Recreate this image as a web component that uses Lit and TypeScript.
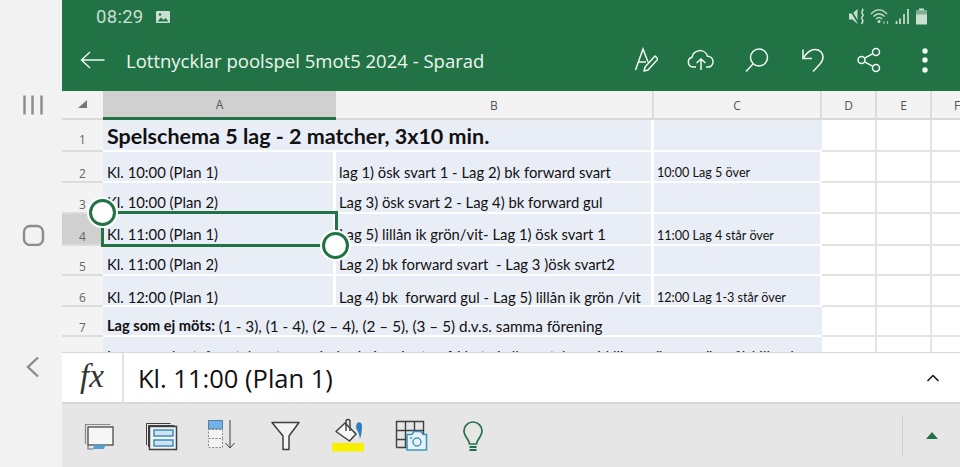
import { LitElement, html, css, svg } from "lit";
import { customElement } from "lit/decorators.js";

type Cell = { t?: unknown; cls: string };

const COLS = ["A", "B", "C", "D", "E", "F"];

const ROWS: { n: string; sel?: boolean; rc?: string; cells: Cell[] }[] = [
  { n: "1", rc: "first", cells: [
    { t: "Spelschema 5 lag - 2 matcher, 3x10 min.", cls: "blue headline span2" },
    { cls: "blue lastfull" },
  ]},
  { n: "2", cells: [
    { t: "Kl. 10:00 (Plan 1)", cls: "blue a" },
    { t: "lag 1) ösk svart 1 - Lag 2) bk forward svart", cls: "blue b" },
    { t: "10:00 Lag 5 över", cls: "blue c" },
  ]},
  { n: "3", cells: [
    { t: "Kl. 10:00 (Plan 2)", cls: "blue a up" },
    { t: "Lag 3) ösk svart 2 - Lag 4) bk forward gul", cls: "blue b up" },
    { cls: "blue c" },
  ]},
  { n: "4", sel: true, cells: [
    { t: "Kl. 11:00 (Plan 1)", cls: "blue a up" },
    { t: "Lag 5) lillån ik grön/vit- Lag 1) ösk svart 1", cls: "blue b up" },
    { t: "11:00 Lag 4 står över", cls: "blue c" },
  ]},
  { n: "5", cells: [
    { t: "Kl. 11:00 (Plan 2)", cls: "blue a up" },
    { t: "Lag 2) bk forward svart  - Lag 3 )ösk svart2", cls: "blue b up" },
    { cls: "blue c" },
  ]},
  { n: "6", cells: [
    { t: "Kl. 12:00 (Plan 1)", cls: "blue a low" },
    { t: "Lag 4) bk  forward gul - Lag 5) lillån ik grön /vit", cls: "blue b low" },
    { t: "12:00 Lag 1-3 står över", cls: "blue c clow" },
  ]},
  { n: "7", cells: [
    { t: html`<b>Lag som ej möts:</b><span class="wide"> (1 - 3), (1 - 4), (2 – 4), (2 – 5), (3 – 5) d.v.s. samma förening</span>`, cls: "blue a span3 low up" },
  ]},
  { n: "", cells: [
    { t: "Lagen spelar två matcher, tre perioder à tio minuter, fri byte i alla matcher, vid lika poäng avgör målskillnad", cls: "blue a span3 clipped" },
  ]},
];

const ic = (w: number, h: number, body: unknown) =>
  html`<svg width=${w} height=${h} viewBox="0 0 ${w} ${h}" fill="none">${body}</svg>`;

const G = "#3f3f3f";
const BL = "#4f9fd0";
const W = "#f2f7f4";
const S = "#c9dfd1";

const TOOL_ICONS = [
  ic(36, 36, svg`
    <path d="M5.500 27V7.500h25" stroke="#8a8a8a" stroke-width="1.200"/>
    <rect x="8" y="10" width="25" height="18" fill="#f6f6f6" stroke="#4a4a4a" stroke-width="1.300"/>
    <path d="M15 28h11l-2.500 4H12.500z" fill="${BL}"/>
    <path d="M8 28v4h5" stroke="#777" stroke-width="1.200"/>`),
  ic(36, 36, svg`
    <path d="M3.500 28V6.500h24M5.500 30V8.500h26" stroke="${G}" stroke-width="1"/>
    <rect x="6.500" y="9.500" width="27" height="23" fill="#f4f4f4" stroke="${G}" stroke-width="1.500"/>
    <rect x="11" y="13" width="19" height="6" fill="#cfe3f1" stroke="#3b8fc0" stroke-width="1.500"/>
    <rect x="11" y="23" width="19" height="6" fill="#cfe3f1" stroke="#3b8fc0" stroke-width="1.500"/>`),
  ic(36, 36, svg`
    <rect x="3.500" y="3.500" width="14" height="8.500" fill="#6fb3ea" stroke="#5a7d9a"/>
    <rect x="3.500" y="12.500" width="14" height="9" fill="#f4f4f4" stroke="#8a8a8a" stroke-dasharray="2 1.500"/>
    <rect x="3.500" y="21.500" width="14" height="9" fill="#f4f4f4" stroke="#8a8a8a" stroke-dasharray="2 1.500"/>
    <path d="M25 3v27M20.500 26l4.500 5 4.500-5" stroke="${G}" stroke-width="1"/>`),
  ic(36, 36, svg`
    <path d="M4 5.500h27L21 19v13.500h-6V19z" stroke="${G}" stroke-width="1.500" stroke-linejoin="round" fill="#f4f4f4"/>`),
  ic(36, 36, svg`
    <rect x="2" y="26" width="32" height="8.500" fill="#f9f000"/>
    <path d="M6 14.500l9-8.500 11 11-6.500 7z" fill="#f7f7f7" stroke="${G}" stroke-width="1.500" stroke-linejoin="round"/>
    <path d="M16 14V4.500a2 2 0 0 1 4 0V14" stroke="${G}" stroke-width="1.400"/>
    <path d="M27 6c3-2 5 0 5 3 0 4-.5 9-2 13-.5-3-1-6-2.500-8-1.500-2-2-5-.5-8z" fill="#2f7fc0"/>`),
  ic(36, 36, svg`
    <path d="M3.500 30.500V4.500h27v14M3.500 13.500h27M3.500 22.500h14M12.500 4.500v26M21.500 4.500v14M3.500 30.500h13" stroke="${G}" stroke-width="1.400"/>
    <path d="M14 17.500h5l2-3h7l2 3h3.500v15.500H14z" fill="#eaf3f8" stroke="#3f96c4" stroke-width="1.600"/>
    <circle cx="24" cy="25" r="4" stroke="#3f96c4" stroke-width="1.500"/>
    <path d="M17 21h2" stroke="#3f96c4" stroke-width="1.500"/>`),
  ic(36, 36, svg`
    <path d="M14.500 27c0-4-5.500-7.500-5.500-13a9 9 0 0 1 18 0c0 5.500-5.500 9-5.500 13z" stroke="#217346" stroke-width="1.700" stroke-linejoin="round"/>
    <path d="M14.500 30h7M14.500 33h7" stroke="#217346" stroke-width="1.800"/>`),
];

@customElement("app-root")
export class AppRoot extends LitElement {
  static styles = css`
    :host { display: block; width: 960px; height: 467px; overflow: hidden; font-family: "Open Sans", sans-serif; }
    .root { display: flex; width: 960px; height: 467px; }
    .rail { width: 62px; flex: none; background: #f2f2f2; display: flex; flex-direction: column; align-items: center; padding: 93px 0 0 3px; box-sizing: border-box; }
    .rail svg { display: block; }
    .rail .home { margin-top: 105px; }
    .rail .backnav { margin-top: 109px; }
    .main { flex: 1; min-width: 0; display: flex; flex-direction: column; }

    .appbar { height: 91px; flex: none; background: #217346; color: #fff; display: flex; flex-direction: column; }
    .status { height: 33px; display: flex; align-items: center; padding: 0 32px 0 34px; color: #c9dfd1; font-family: Roboto, sans-serif; font-size: 18.500px; letter-spacing: .3px; }
    .status .time { margin-right: 11px; }
    .status svg { display: block; }
    .spacer { flex: 1; }
    .status .right { display: flex; align-items: center; gap: 5px; }
    .actions { height: 54px; display: flex; align-items: center; padding: 0 7px 0 18px; }
    .doc { margin-left: 21px; font-size: 18.500px; color: #eef5f0; white-space: nowrap; }
    .act { width: 56px; display: flex; justify-content: center; }
    .act svg { display: block; }

    .sheet { position: relative; flex: none; height: 261px; overflow: hidden; background: #fff; }
    .grid { display: grid; grid-template-columns: 41px 233px 318px 168px 55px 55px 52px; grid-template-rows: 29px 32px 31px 31px 32px 30px 31px 30px 30px; }
    .corner, .colh { background: #f3f3f3; border-bottom: 2px solid #d9d9d9; box-sizing: border-box; }
    .corner { display: flex; align-items: center; justify-content: center; }
    .colh { display: flex; align-items: center; justify-content: center; font-size: 12px; color: #555; border-right: 2px solid #dcdcdc; padding-top: 1px; }
    .colh.on { background: #d0d0d0; border-right: none; border-bottom: 3px solid #217346; }
    .rowh { background: #f3f3f3; border-bottom: 2px solid #dcdcdc; box-sizing: border-box; display: flex; align-items: flex-end; justify-content: center; font-size: 12px; line-height: 15px; color: #666; }
    .rowh.first { padding-bottom: 3px; }
    .rowh.on { background: #d0d0d0; }
    .cell { box-sizing: border-box; display: flex; align-items: flex-end; white-space: pre; font-family: Lato, sans-serif; color: #111; min-width: 0; }
    .blue { background: #e9edf6; background-clip: padding-box; border-right: 3px solid #fff; border-bottom: 2px solid #fff; font-size: 14.850px; padding-left: 3px; line-height: 18px; }
    .a { padding-left: 4px; }
    .up { padding-bottom: 1px; }
    .low { line-height: 16px; }
    .c { font-size: 12.600px; border-right-width: 2px; padding-left: 3px; line-height: 16px; }
    .clow { line-height: 14px; }
    .cell b { font-size: 14.600px; }
    .wide { font-size: 15.300px; }
    .cell.headline { font-size: 21.500px; font-weight: 700; padding-left: 4px; line-height: 24px; padding-bottom: 2px; }
    .lastfull { border-right: none; }
    .span2 { grid-column: span 2; }
    .span3 { grid-column: span 3; border-right: none; }
    .clipped span { display: block; margin-bottom: 0; }
    .empty { border-right: 2px solid #e4e4e4; border-bottom: 2px solid #e4e4e4; box-sizing: border-box; background: #fff; }

    .selection { position: absolute; left: 39px; top: 120px; width: 237px; height: 36px; box-sizing: border-box; border: 3px solid #217346; }
    .handle { position: absolute; width: 27px; height: 27px; box-sizing: border-box; border-radius: 50%; background: #fff; border: 3px solid #217346; box-shadow: 0 0 0 2px #fff; }
    .h1 { left: 27px; top: 108px; }
    .h2 { left: 260px; top: 141px; }

    .formula { height: 52px; flex: none; background: #fff; border-top: 1px solid #d8d8d8; border-bottom: 2px solid #d8d8d8; box-sizing: border-box; display: flex; align-items: center; }
    .fx { width: 62px; height: 100%; flex: none; box-sizing: border-box; border-right: 2px solid #e2e2e2; display: flex; align-items: center; justify-content: center; font-family: "Liberation Serif", serif; font-style: italic; font-size: 33px; color: #333; padding-bottom: 2px; }
    .value { margin-left: 14px; font-size: 25.500px; color: #111; white-space: nowrap; }
    .chev { margin-left: auto; margin-right: 20px; display: block; }
    .chev svg { display: block; }

    .tools { flex: 1; background: #e6e6e6; display: flex; align-items: center; padding-left: 5px; }
    .tool { width: 62.500px; display: flex; justify-content: center; padding-bottom: 2px; }
    .tool svg { display: block; }
    .divider { margin-left: auto; width: 1px; height: 41px; background: #cfcfcf; margin-right: 23px; }
    .more { width: 0; height: 0; border-left: 6px solid transparent; border-right: 6px solid transparent; border-bottom: 7px solid #217346; margin-right: 22px; }
  `;

  private renderCells() {
    return ROWS.map((r) => html`
      <div class="rowh ${r.sel ? "on" : ""} ${r.rc ?? ""}">${r.n}</div>
      ${r.cells.map((c) => html`<div class="cell ${c.cls}">${c.cls.includes("clipped") ? html`<span>${c.t}</span>` : c.t}</div>`)}
      <div class="empty"></div><div class="empty"></div><div class="empty"></div>
    `);
  }

  render() {
    return html`
      <div class="root">
        <div class="rail">
          ${ic(24, 24, svg`<path d="M3.500 2.500v19M11.500 2.500v19M20.500 2.500v19" stroke="#8c8c8c" stroke-width="2.400"/>`)}
          <span class="home">${ic(24, 24, svg`<rect x="3" y="4" width="19" height="19" rx="6" stroke="#8c8c8c" stroke-width="2.400"/>`)}</span>
          <span class="backnav">${ic(24, 24, svg`<path d="M17 2.500L7 12l10 9.500" stroke="#8c8c8c" stroke-width="2.400"/>`)}</span>
        </div>
        <div class="main">
          <div class="appbar">
            <div class="status">
              <span class="time">08:29</span>
              ${ic(16, 14, svg`<rect x="1" y="1" width="14" height="12" rx="1" fill="${S}"/><path d="M2.500 11.500l3.500-4 2.500 2.500 2-2 3 3.500z" fill="#217346"/><circle cx="5" cy="4.500" r="1.300" fill="#217346"/>`)}
              <span class="spacer"></span>
              <span class="right">
                ${ic(17, 17, svg`<path d="M1 5.500h3.500L9.500 1v15l-5-4.500H1z" fill="${S}"/><path d="M2 1l9 15" stroke="#217346" stroke-width="1.600"/><path d="M14 1c2.500 1.500-2 3 .5 5s-2.500 3-.5 5 .5 3.500-.5 5" stroke="${S}" stroke-width="1.500"/>`)}
                ${ic(20, 17, svg`<path d="M1 6c5-5.500 11-5.500 16 0M3.500 8.500c3.500-3.500 7.500-3.500 11 0M6 11c2-2 4-2 6 0" stroke="${S}" stroke-width="1.300"/><circle cx="9" cy="13.500" r="1.500" fill="${S}"/><path d="M14 16v-3M17.500 16v-3" stroke="#9cc6ad" stroke-width="1.100"/>`)}
                ${ic(15, 17, svg`<path d="M1.500 13v3M5 10.500V16M9 6v10M13 1v15" stroke="${S}" stroke-width="1.700"/>`)}
                ${ic(13, 17, svg`<rect x="4" y="0.500" width="5" height="2" fill="${S}"/><rect x="1" y="2.500" width="11" height="14" fill="${S}"/><rect x="1" y="2.500" width="11" height="4" fill="#7fb193"/>`)}
              </span>
            </div>
            <div class="actions">
              ${ic(25, 18, svg`<path d="M24.500 9H1.500M10 1L1.500 9l8.500 8" stroke="${W}" stroke-width="1.400"/>`)}
              <span class="doc">Lottnycklar poolspel 5mot5 2024 - Sparad</span>
              <span class="spacer"></span>
              <span class="act">${ic(26, 26, svg`<g transform="translate(3 0)"><path d="M.5 23L8 2l5 13M3.500 15h7.500" stroke="${W}" stroke-width="1.500"/><path d="M20 9l3 3-10 11-4 1 1-4z" stroke="${W}" stroke-width="1.500" stroke-linejoin="round"/></g>`)}</span>
              <span class="act">${ic(28, 22, svg`<path d="M9 18H6a5 5 0 0 1-1-9.800 8 8 0 0 1 15.500-1A5.500 5.500 0 0 1 22 18h-3" stroke="${W}" stroke-width="1.500"/><path d="M14 21V10M9.500 14L14 10l4.500 4" stroke="${W}" stroke-width="1.500"/>`)}</span>
              <span class="act">${ic(26, 26, svg`<circle cx="15" cy="10.500" r="8.500" stroke="${W}" stroke-width="1.500"/><path d="M9 17L2 24.500" stroke="${W}" stroke-width="1.500"/>`)}</span>
              <span class="act">${ic(24, 26, svg`<path d="M2 2.500v9h9" stroke="${W}" stroke-width="1.500"/><path d="M2 11.500C6 5 9 2.500 14 2.500c5 0 8 3.500 8 7.500 0 3-1 5-3 7l-7 7.500" stroke="${W}" stroke-width="1.500"/>`)}</span>
              <span class="act">${ic(26, 26, svg`<circle cx="5.500" cy="13" r="3.500" stroke="${W}" stroke-width="1.500"/><circle cx="20" cy="5" r="3.500" stroke="${W}" stroke-width="1.500"/><circle cx="20" cy="21" r="3.500" stroke="${W}" stroke-width="1.500"/><path d="M8.500 11.200L17 6.700M8.500 14.800L17 19.300" stroke="${W}" stroke-width="1.500"/>`)}</span>
              <span class="act">${ic(8, 26, svg`<circle cx="4" cy="4" r="2.700" fill="${W}"/><circle cx="4" cy="13" r="2.700" fill="${W}"/><circle cx="4" cy="23" r="2.700" fill="${W}"/>`)}</span>
            </div>
          </div>

          <div class="sheet">
            <div class="grid">
              <div class="corner">${ic(10, 9, svg`<path d="M9 0v8H0z" fill="#777"/>`)}</div>
              ${COLS.map((c, i) => html`<div class="colh ${i === 0 ? "on" : ""}">${c}</div>`)}
              ${this.renderCells()}
            </div>
            <div class="selection"></div>
            <div class="handle h1"></div>
            <div class="handle h2"></div>
          </div>

          <div class="formula">
            <div class="fx">fx</div>
            <div class="value">Kl. 11:00 (Plan 1)</div>
            <span class="chev">${ic(14, 9, svg`<path d="M1.500 8l5.500-5.500L12.500 8" stroke="#111" stroke-width="1.500"/>`)}</span>
          </div>

          <div class="tools">
            ${TOOL_ICONS.map((i) => html`<div class="tool">${i}</div>`)}
            <div class="divider"></div>
            <div class="more"></div>
          </div>
        </div>
      </div>
    `;
  }
}
